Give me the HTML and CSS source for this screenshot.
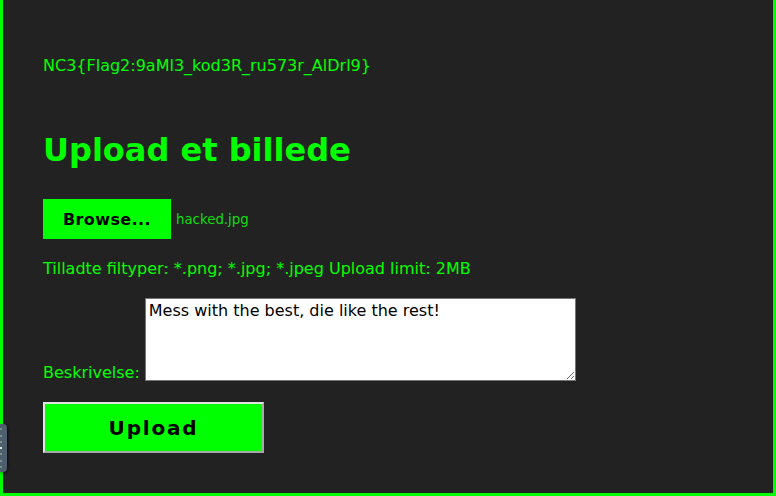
FILE: index.html
```html
<!DOCTYPE html>
<html lang="da">
<head>
<meta charset="utf-8">
<title>Upload et billede</title>
<link rel="stylesheet" href="styles.css">
</head>
<body>
<div class="page">
  <p class="flag">NC3{Flag2:9aMl3_kod3R_ru573r_AlDrl9}</p>
  <h1 class="title">Upload et billede</h1>
  <form class="upload-form">
    <div class="file-row">
      <span class="browse-btn">Browse...</span>
      <span class="file-name">hacked.jpg</span>
    </div>
    <p class="hint">Tilladte filtyper: *.png; *.jpg; *.jpeg Upload limit: 2MB</p>
    <div class="desc-row">
      <label class="desc-label" for="desc">Beskrivelse:</label>
      <textarea id="desc" class="desc-input">Mess with the best, die like the rest!</textarea>
    </div>
    <button type="button" class="upload-btn">Upload</button>
  </form>
</div>
<div class="side-tab"><span class="dot"></span><span class="dot"></span><span class="dot"></span><span class="dot lit"></span><span class="dot"></span><span class="dot"></span><span class="dot"></span></div>
</body>
</html>
```
FILE: styles.css
```css
html, body {
  margin: 0;
  padding: 0;
  height: 100%;
  background: #222222;
}
body {
  font-family: "DejaVu Sans", sans-serif;
  color: #00ff00;
  overflow: hidden;
}
.page {
  box-sizing: border-box;
  height: 496px;
  border: 3px solid #00ff00;
  border-top: none;
  padding: 56px 40px 0;
}
.flag {
  margin: 0;
  font-size: 16px;
  line-height: 19px;
}
.title {
  margin: 56px 0 0;
  font-size: 32px;
  font-weight: bold;
  line-height: 38px;
}
.upload-form {
  margin-top: 30px;
}
.file-row {
  display: flex;
  align-items: center;
}
.browse-btn {
  display: flex;
  align-items: center;
  justify-content: center;
  width: 128px;
  height: 40px;
  background: #00ff00;
  color: #000;
  font-weight: bold;
  font-size: 16px;
  letter-spacing: 0.4px;
}
.file-name {
  margin-left: 5px;
  font-size: 13.333px;
  color: #10dd10;
}
.hint {
  margin: 20px 0 0;
  font-size: 16px;
  line-height: 19px;
}
.desc-row {
  margin-top: 20px;
  display: flex;
  align-items: flex-end;
}
.desc-label {
  font-size: 16px;
  line-height: 19px;
  margin-right: 5px;
  margin-bottom: -1px;
}
.desc-input {
  box-sizing: border-box;
  width: 431px;
  height: 83px;
  margin: 0;
  padding: 2px 3px;
  border: 1px solid #767676;
  background: #fff;
  color: #000;
  font-family: "DejaVu Sans", sans-serif;
  font-size: 16px;
  line-height: 19px;
}
.upload-btn {
  display: block;
  box-sizing: border-box;
  margin-top: 21px;
  width: 221px;
  height: 51px;
  background: #00ff00;
  border: 2px solid;
  border-color: #e2e2e2 #a8a8a8 #a8a8a8 #e2e2e2;
  color: #000;
  font-family: "DejaVu Sans", sans-serif;
  font-weight: bold;
  font-size: 20px;
  letter-spacing: 1.8px;
  padding: 0;
}
.side-tab {
  position: fixed;
  left: 0;
  top: 424px;
  width: 7px;
  height: 48px;
  background: #4e5e6e;
  border-radius: 0 4px 4px 0;
  box-shadow: 1px 1px 3px rgba(0, 0, 0, 0.6);
  display: flex;
  flex-direction: column;
  justify-content: space-evenly;
  align-items: flex-start;
}
.dot {
  display: block;
  width: 2px;
  height: 2px;
  background: #6f9a80;
}
.dot.lit {
  background: #d0f0d0;
}
```
